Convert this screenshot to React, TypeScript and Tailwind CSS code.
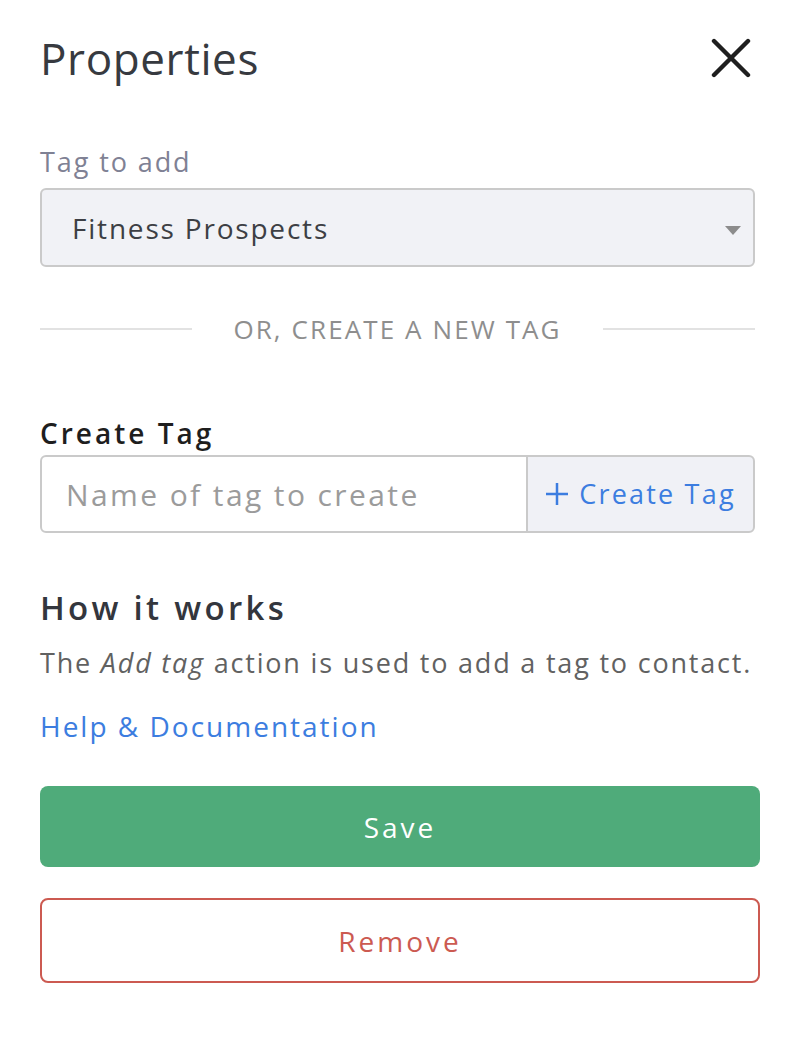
import { useState } from "react";

const font = { fontFamily: '"Open Sans", "Noto Sans", sans-serif' };

export default function App() {
  const [tag, setTag] = useState("Fitness Prospects");
  const [newTag, setNewTag] = useState("");

  return (
    <div className="min-h-[1056px] w-[796px] bg-white pl-10 pr-[41px] pt-[30px]" style={font}>
      {/* header */}
      <div className="flex items-center justify-between">
        <h1 className="text-[44px] leading-[56px] font-normal tracking-[0.6px] text-[#373a40]">Properties</h1>
        <button className="mr-[4px] flex h-10 w-10 items-center justify-center text-[#1f1f1f]" aria-label="Close">
          <svg width="40" height="40" viewBox="0 0 40 40" fill="none">
            <path d="M3 3L37 37M37 3L3 37" stroke="currentColor" strokeWidth="4.4" strokeLinecap="round" />
          </svg>
        </button>
      </div>

      {/* existing tag */}
      <div className="mt-[59px] text-[27px] leading-[34px] tracking-[1.9px] text-[#7f8194]">Tag to add</div>
      <div className="relative mt-[9px]">
        <select
          value={tag}
          onChange={(e) => setTag(e.target.value)}
          className="h-[79px] w-full appearance-none rounded-md border-2 border-[#cacaca] bg-[#f1f2f6] pl-[30px] text-[28px] tracking-[1.8px] text-[#3d3f44] outline-none"
        >
          <option>Fitness Prospects</option>
          <option>Newsletter</option>
        </select>
        <svg className="pointer-events-none absolute right-[14px] top-[38px]" width="16" height="9" viewBox="0 0 16 9">
          <path d="M0 0H16L8 9Z" fill="#8c8c8c" />
        </svg>
      </div>

      {/* divider */}
      <div className="mt-[45px] flex items-center gap-[41px]">
        <div className="h-[2px] flex-1 bg-[#e2e2e2]" />
        <span className="text-[26px] leading-[34px] tracking-[2.1px] text-[#8e8e8e]">OR, CREATE A NEW TAG</span>
        <div className="h-[2px] flex-1 bg-[#e2e2e2]" />
      </div>

      {/* new tag */}
      <div className="mt-[70px] text-[28px] leading-[34px] font-semibold tracking-[3px] text-[#1e1e1e]">Create Tag</div>
      <div className="mt-[5px] flex h-[78px]">
        <input
          value={newTag}
          onChange={(e) => setNewTag(e.target.value)}
          placeholder="Name of tag to create"
          className="h-full w-[488px] rounded-l-md border-2 border-[#cacaca] bg-white pl-[24px] text-[30px] tracking-[2.4px] text-[#3d3f44] outline-none placeholder:text-[#9b9b9b]"
        />
        <button className="-ml-[2px] flex h-full flex-1 items-center justify-center gap-[10px] rounded-r-md border-2 border-[#cacaca] bg-[#f0f1f6] text-[27px] tracking-[2.2px] text-[#3c7de0]">
          <svg width="24" height="24" viewBox="0 0 24 24">
            <path d="M12 1V23M1 12H23" stroke="currentColor" strokeWidth="2.5" />
          </svg>
          Create Tag
        </button>
      </div>

      {/* how it works */}
      <h2 className="mt-[55px] text-[33px] leading-[40px] font-semibold tracking-[3.3px] text-[#33363d]">How it works</h2>
      <p className="mt-[17px] text-[27px] leading-[36px] tracking-[1.8px] text-[#616161]">
        The <em>Add tag</em> action is used to add a tag to contact.
      </p>
      <a href="#" className="mt-[27px] block text-[28px] leading-[36px] tracking-[2px] text-[#3c7de0]">
        Help &amp; Documentation
      </a>

      {/* actions */}
      <div className="-mr-[5px]">
        <button className="mt-[42px] flex h-[81px] w-full items-center justify-center rounded-lg bg-[#4fab7a] text-[28px] tracking-[3px] text-white">
          Save
        </button>
        <button className="mt-[31px] flex h-[85px] w-full items-center justify-center rounded-lg border-2 border-[#cc5a51] bg-white text-[28px] tracking-[3px] text-[#cc5a51]">
          Remove
        </button>
      </div>
    </div>
  );
}
